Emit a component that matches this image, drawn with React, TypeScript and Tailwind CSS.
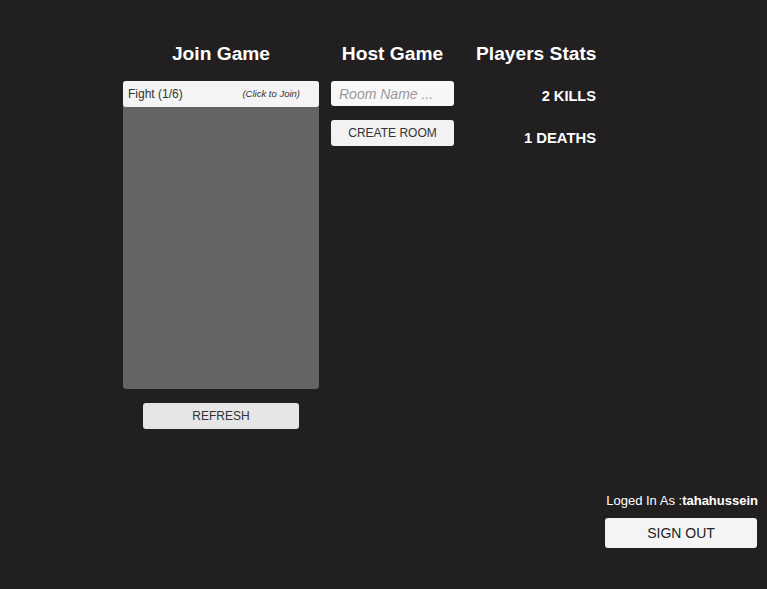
export default function App() {
  return (
    <div
      className="w-[767px] h-[589px] bg-[#221f20] flex flex-col overflow-hidden"
      style={{ fontFamily: '"Liberation Sans", Arial, sans-serif' }}
    >
      <div className="flex pt-[43px] pl-[123px]">
        {/* Join Game */}
        <div className="w-[196px] flex flex-col">
          <div className="h-[22px] leading-[22px] text-[19.2px] font-bold text-white text-center">Join Game</div>
          <div className="mt-[16px] h-[308px] bg-[#646464] rounded-[3px] flex flex-col">
            <div className="h-[26px] bg-[#f4f4f4] rounded-[3px] flex items-center justify-between pl-[5px] pr-[19px] cursor-pointer">
              <span className="text-[12px] text-[#333]">Fight (1/6)</span>
              <span className="text-[9.5px] italic text-[#333]">(Click to Join)</span>
            </div>
          </div>
          <button className="mt-[14px] mx-auto w-[156px] h-[26px] bg-[#e6e6e6] rounded-[3px] text-[12px] text-[#333]">
            REFRESH
          </button>
        </div>
        {/* Host Game */}
        <div className="ml-[12px] w-[123px] flex flex-col">
          <div className="h-[22px] leading-[22px] text-[19.2px] font-bold text-white text-center whitespace-nowrap">Host Game</div>
          <input
            className="mt-[16px] h-[25px] bg-[#f8f8f8] rounded-[3px] px-[8px] text-[14px] italic text-[#333] placeholder:text-[#9a9a9a] outline-none"
            placeholder="Room Name ..."
          />
          <button className="mt-[14px] h-[26px] bg-[#f2f2f2] rounded-[3px] text-[12px] text-[#333]">
            CREATE ROOM
          </button>
        </div>
        {/* Players Stats */}
        <div className="ml-[22px] w-[120px] flex flex-col">
          <div className="h-[22px] leading-[22px] text-[19.2px] font-bold text-white text-center whitespace-nowrap">Players Stats</div>
          <div className="mt-[21px] leading-[20px] text-[14.6px] font-bold text-white text-right">2 KILLS</div>
          <div className="mt-[22px] leading-[20px] text-[14.8px] font-bold text-white text-right">1 DEATHS</div>
        </div>
      </div>
      <div className="mt-auto flex flex-col items-end pr-[9px] pb-[41px]">
        <div className="leading-[16px] text-[13px] text-white whitespace-nowrap">
          Loged In As :<span className="font-bold">tahahussein</span>
        </div>
        <button className="mt-[9px] mr-[1px] w-[152px] h-[30px] bg-[#f4f4f4] rounded-[3px] text-[14px] text-[#222]">
          SIGN OUT
        </button>
      </div>
    </div>
  );
}
